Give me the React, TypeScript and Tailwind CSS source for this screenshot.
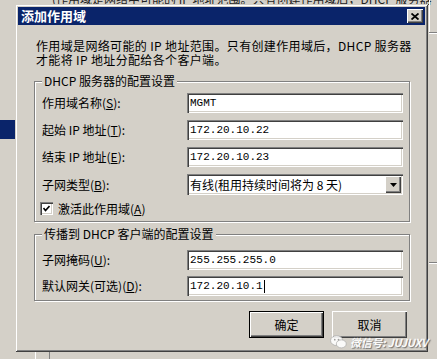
import React from 'react';

const raised = 'shadow-[inset_1px_1px_#ffffff,inset_-1px_-1px_#404040,inset_-2px_-2px_#808080]';
const sunken = 'shadow-[inset_1px_1px_#808080,inset_2px_2px_#404040,inset_-1px_-1px_#ffffff,inset_-2px_-2px_#d4d0c8]';

function Hot({ k }: { k: string }) {
  return (
    <span>
      (<span className="underline underline-offset-1">{k}</span>)
    </span>
  );
}

function Field({ label, value, caret }: { label: React.ReactNode; value: string; caret?: boolean }) {
  return (
    <div className="flex items-center h-[20px]">
      <div className="w-[152px] pl-[7px] whitespace-nowrap">{label}</div>
      <div className={`h-[20px] w-[216px] bg-white ${sunken} flex items-center pl-[3px] font-['Liberation_Mono',monospace] text-[11px] text-black`}>
        {value}
        {caret && <span className="inline-block w-[1px] h-[13px] bg-black ml-[1px]" />}
      </div>
    </div>
  );
}

function GroupBox({ title, className, children }: { title: string; className?: string; children: React.ReactNode }) {
  return (
    <div className={`relative border border-[#808080] shadow-[1px_1px_0_#ffffff,inset_1px_1px_0_#ffffff] ${className ?? ''}`}>
      <span className="absolute -top-[8px] left-[7px] px-[2px] bg-[#d4d0c8] leading-[14px] whitespace-nowrap">{title}</span>
      {children}
    </div>
  );
}

export default function App() {
  return (
    <div className="relative w-[437px] h-[359px] overflow-hidden bg-[#d4d0c8] font-['Noto_Sans_CJK_SC',sans-serif] text-[12px] text-black">
      {/* window behind the dialog */}
      <div className="absolute -top-[8px] left-[52px] whitespace-nowrap leading-[13px] text-[#222]">
        (作用域是网络中可能的 IP 地址范围。只有创建作用域后，DHCP 服务器
      </div>
      <div className="absolute top-[120px] left-0 w-[16px] h-[19px] bg-[#0a246a]" />
      <div className="absolute top-0 left-[429px] w-[1px] h-[32px] bg-white" />
      <div className="absolute top-[32px] left-[429px] w-[8px] h-[1px] bg-[#808080]" />
      <div className="absolute top-[33px] left-[429px] w-[8px] h-[1px] bg-white" />
      <div className="absolute top-[262px] left-[429px] w-[8px] h-[1px] bg-[#808080]" />
      <div className="absolute top-[263px] left-[429px] w-[8px] h-[1px] bg-white" />
      <div className="absolute top-[352px] left-[35px] w-[1px] h-[7px] bg-white" />
      <div className="absolute top-[352px] left-[49px] w-[1px] h-[7px] bg-[#808080]" />

      {/* dialog */}
      <div className="absolute left-[15px] top-[4px] w-[413px] h-[348px] p-[3px] bg-[#d4d0c8] shadow-[inset_1px_1px_#d4d0c8,inset_-1px_-1px_#404040,inset_2px_2px_#ffffff,inset_-2px_-2px_#808080]">
        <div className="h-[18px] bg-[#0a246a] flex items-center justify-between pl-[3px] pr-[2px]">
          <span className="text-white font-bold text-[13px] leading-[18px]">添加作用域</span>
          <button className={`w-[16px] h-[14px] bg-[#d4d0c8] ${raised} flex items-center justify-center`}>
            <svg width="8" height="7" viewBox="0 0 8 7">
              <path d="M0.5 0.5 L7.5 6.5 M7.5 0.5 L0.5 6.5" stroke="#000" strokeWidth="1.8" />
            </svg>
          </button>
        </div>

        <div className="pl-[16px] pr-[15px]">
          <div className="mt-[14px] pl-[2px] flex flex-col leading-[14px] tracking-[0.35px] whitespace-nowrap">
            <span>作用域是网络可能的 IP 地址范围。只有创建作用域后，DHCP 服务器</span>
            <span>才能将 IP 地址分配给各个客户端。</span>
          </div>

          <GroupBox title="DHCP 服务器的配置设置" className="mt-[14px] pt-[11px] pb-[6px]">
            <div className="flex flex-col gap-[7px]">
              <Field label={<>作用域名称<Hot k="S" />:</>} value="MGMT" />
              <Field label={<>起始 IP 地址<Hot k="T" />:</>} value="172.20.10.22" />
              <Field label={<>结束 IP 地址<Hot k="E" />:</>} value="172.20.10.23" />
              <div className="flex items-center h-[21px]">
                <div className="w-[152px] pl-[7px] whitespace-nowrap">子网类型<Hot k="B" />:</div>
                <div className={`h-[21px] w-[216px] bg-white ${sunken} flex items-center pl-[3px] pr-[2px]`}>
                  <span className="flex-1 whitespace-nowrap">有线(租用持续时间将为 8 天)</span>
                  <div className={`w-[16px] h-[17px] bg-[#d4d0c8] ${raised} flex items-center justify-center`}>
                    <svg width="7" height="4" viewBox="0 0 7 4">
                      <path d="M0 0 H7 L3.5 4 Z" fill="#000" />
                    </svg>
                  </div>
                </div>
              </div>
            </div>
            <label className="mt-[7px] ml-[5px] flex items-center h-[13px] gap-[5px]">
              <span className={`w-[13px] h-[13px] bg-white ${sunken} flex items-center justify-center`}>
                <svg width="7" height="7" viewBox="0 0 7 7">
                  <path d="M0.5 3 L2.5 5.5 L6.5 1" stroke="#000" strokeWidth="1.6" fill="none" />
                </svg>
              </span>
              <span className="whitespace-nowrap">激活此作用域<Hot k="A" /></span>
            </label>
          </GroupBox>

          <GroupBox title="传播到 DHCP 客户端的配置设置" className="mt-[12px] pt-[15px] pb-[4px]">
            <div className="flex flex-col gap-[6px]">
              <Field label={<>子网掩码<Hot k="U" />:</>} value="255.255.255.0" />
              <Field label={<>默认网关(可选)<Hot k="D" />:</>} value="172.20.10.1" caret />
            </div>
          </GroupBox>

          <div className="mt-[10px] flex justify-end gap-[8px] pr-[3px]">
            <button className={`w-[75px] h-[27px] border border-black bg-[#d4d0c8] ${raised}`}>确定</button>
            <button className={`w-[75px] h-[27px] bg-[#d4d0c8] ${raised}`}>取消</button>
          </div>
        </div>
      </div>

      {/* watermark */}
      <div className="absolute left-[330px] top-[335px] flex items-center gap-[3px] opacity-90">
        <svg width="17" height="14" viewBox="0 0 18 15">
          <ellipse cx="7" cy="6" rx="6.5" ry="5.3" fill="#fff" stroke="#aaa" strokeWidth="0.8" />
          <ellipse cx="12" cy="9.5" rx="5.3" ry="4.3" fill="#fff" stroke="#aaa" strokeWidth="0.8" />
          <circle cx="5" cy="5" r="0.9" fill="#999" />
          <circle cx="9" cy="5" r="0.9" fill="#999" />
        </svg>
        <span className="text-white italic font-bold text-[11px] leading-[14px] tracking-[-0.3px] whitespace-nowrap [text-shadow:1px_1px_1px_#666]">
          微信号: JUJUXV
        </span>
      </div>
    </div>
  );
}
